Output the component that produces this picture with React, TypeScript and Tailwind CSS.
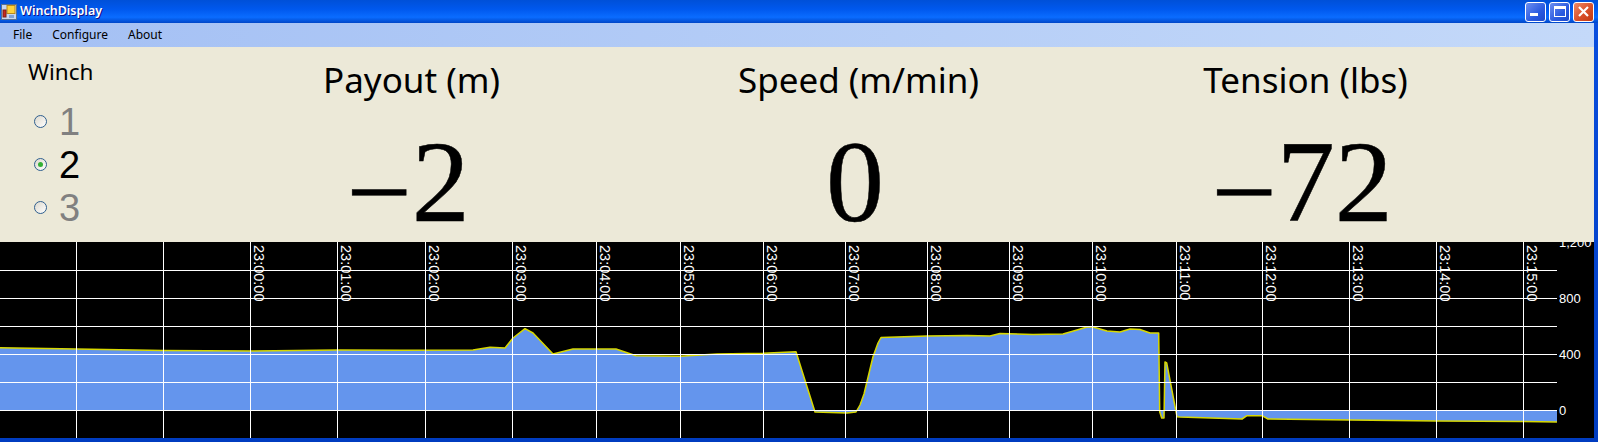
const gridX = [76, 163, 250, 337, 425, 512, 596, 680, 763, 845, 927, 1009, 1092, 1176, 1262, 1349, 1436, 1523];
const gridY = [270, 298, 326, 354, 382, 410];
const times = ["23:00:00", "23:01:00", "23:02:00", "23:03:00", "23:04:00", "23:05:00", "23:06:00", "23:07:00", "23:08:00", "23:09:00", "23:10:00", "23:11:00", "23:12:00", "23:13:00", "23:14:00", "23:15:00"];
const ticks = [
  { label: "1,200", y: 242 },
  { label: "800", y: 298 },
  { label: "400", y: 354 },
  { label: "0", y: 410 },
];

// tension trace, read off the screenshot
const trace = [
  [0, 347.7], [76, 349], [163, 350.5], [250, 351], [337, 350], [400, 350.3], [473, 350], [490, 347.3], [505, 348],
  [513, 338], [525, 328.7], [533, 333], [553, 354], [573, 349], [616, 349], [636, 355.7], [680, 356.3], [717, 354],
  [763, 353.3], [796, 351.7], [815, 412], [847, 413], [856, 412], [860, 405], [864, 394], [873, 356.7], [878, 343], [881, 337.5], [897, 337],
  [927, 336], [967, 335.5], [990, 336], [1000, 333.5], [1033, 334.5], [1063, 334], [1077, 330], [1087, 327], [1093, 327],
  [1107, 331], [1120, 332], [1130, 329], [1140, 329.5], [1150, 333], [1158.7, 333], [1159.7, 411.7], [1161.7, 418],
  [1164, 418], [1165, 362], [1166.7, 363], [1177, 416.7], [1180, 417], [1242, 419], [1247, 415.7], [1262, 415.7],
  [1268, 419], [1350, 420], [1437, 421], [1523, 421.5], [1557, 422],
];
const linePoints = trace.map((p) => p.join(",")).join(" ");
const areaPoints = `0,410 ${linePoints} 1557,410`;

function WindowIcon() {
  return (
    <svg width="16" height="16" viewBox="0 0 16 16" className="shrink-0">
      <rect x="0.5" y="0.5" width="15" height="15" fill="#c9d6ee" stroke="#59708f" />
      <rect x="6" y="1.5" width="8" height="8" fill="#ffd23c" stroke="#b98a1a" />
      <rect x="2" y="6" width="3" height="7" fill="#c8281e" stroke="#7a2018" />
      <rect x="8" y="11" width="5" height="3" fill="#7fa3d8" />
    </svg>
  );
}

function WindowButtons() {
  return (
    <div className="flex h-5 items-start gap-[3px] pr-[4px]">
      <div className="flex h-5 w-[21px] items-end rounded-[3px] border border-white bg-[linear-gradient(135deg,#6d8ff0,#2a5ae0_60%,#1d49cc)] pb-[5px] pl-[4px]">
        <div className="h-[3px] w-[8px] bg-white" />
      </div>
      <div className="flex h-5 w-[21px] items-center justify-center rounded-[3px] border border-white bg-[linear-gradient(135deg,#6d8ff0,#2a5ae0_60%,#1d49cc)]">
        <div className="h-[11px] w-[12px] border border-t-[3px] border-white" />
      </div>
      <div className="flex h-5 w-[21px] items-center justify-center rounded-[3px] border border-white bg-[linear-gradient(135deg,#ee8a66,#d9502a_55%,#c23a14)]">
        <svg width="13" height="13" viewBox="0 0 13 13">
          <path d="M2 2 L11 11 M11 2 L2 11" stroke="#fff" strokeWidth="2.2" />
        </svg>
      </div>
    </div>
  );
}

function Radio({ value, checked }: { value: string; checked?: boolean }) {
  return (
    <div className="flex h-[43px] items-center gap-[12px] pl-[34px]">
      <span className="flex h-[13px] w-[13px] items-center justify-center rounded-full border border-[#2f5f8f] bg-[linear-gradient(135deg,#dcd8cc,#ffffff)]">
        {checked && <span className="h-[5px] w-[5px] rounded-full bg-[#35b035]" />}
      </span>
      <span className={`font-['Liberation_Sans',sans-serif] text-[38px] leading-none ${checked ? "text-black" : "text-[#808080]"}`}>
        {value}
      </span>
    </div>
  );
}

function Readout({ title, value, negative }: { title: string; value: string; negative?: boolean }) {
  return (
    <div className="flex flex-col items-center">
      <div className="mt-[8px] text-[35px] leading-[50px] text-black">{title}</div>
      <div className="mt-[17px] pr-[7px] font-['Liberation_Serif',serif] text-[116px] leading-[120px] text-black [-webkit-text-stroke:0.5px_#000]">
        {negative && <span className="inline-block translate-y-[10px]">−</span>}
        {value}
      </div>
    </div>
  );
}

function Chart() {
  return (
    <svg width="1594" height="196" viewBox="0 242 1594 196" className="block bg-black">
      <polygon points={areaPoints} fill="#6495ed" />
      <polyline points={linePoints} fill="none" stroke="#d8d800" strokeWidth="1.5" strokeLinejoin="round" />
      <g stroke="#fff" shapeRendering="crispEdges">
        {gridX.map((x) => (
          <line key={x} x1={x + 0.5} y1="242" x2={x + 0.5} y2="438" />
        ))}
        {gridY.map((y) => (
          <line key={y} x1="0" y1={y + 0.5} x2="1557" y2={y + 0.5} />
        ))}
      </g>
      <g fill="#fff" fontFamily="'Liberation Sans', sans-serif" fontSize="14.5">
        {times.map((t, i) => (
          <text key={t} transform={`translate(${gridX[i + 2] + 4} 245) rotate(90)`}>
            {t}
          </text>
        ))}
      </g>
      <g fill="#fff" fontFamily="'Liberation Sans', sans-serif" fontSize="13">
        {ticks.map((t) => (
          <text key={t.label} x="1559" y={t.y + 5}>
            {t.label}
          </text>
        ))}
      </g>
    </svg>
  );
}

export default function App() {
  return (
    <div className="flex h-[442px] w-[1598px] flex-col overflow-hidden bg-[linear-gradient(180deg,#0a4fe0,#003cc0)] font-['Noto_Sans',sans-serif]">
      <div className="flex h-[23px] items-center justify-between bg-[linear-gradient(180deg,#0050d8_0%,#0058ee_40%,#0a6cff_75%,#0046c8_100%)]">
        <div className="flex items-center gap-[3px] pl-[1px]">
          <WindowIcon />
          <span className="text-[12.5px] font-semibold text-white [text-shadow:1px_1px_#0f1089]">WinchDisplay</span>
        </div>
        <WindowButtons />
      </div>
      <div className="flex flex-1 flex-col pb-[4px] pr-[4px]">
        <div className="flex h-[24px] items-center bg-[linear-gradient(90deg,#a4c0f4,#c4d9f9)] text-[12px] text-black">
          <span className="ml-[13px]">File</span>
          <span className="ml-[20px]">Configure</span>
          <span className="ml-[20px]">About</span>
        </div>
        <div className="grid h-[195px] grid-cols-[188px_447px_447px_447px] bg-[#ece9d8]">
          <div>
            <div className="ml-[28px] mt-[9px] text-[22.5px] leading-[32px] text-black">Winch</div>
            <div className="mt-[12px]">
              <Radio value="1" />
              <Radio value="2" checked />
              <Radio value="3" />
            </div>
          </div>
          <Readout title="Payout (m)" value="2" negative />
          <Readout title="Speed (m/min)" value="0" />
          <Readout title="Tension (lbs)" value="72" negative />
        </div>
        <Chart />
      </div>
    </div>
  );
}
